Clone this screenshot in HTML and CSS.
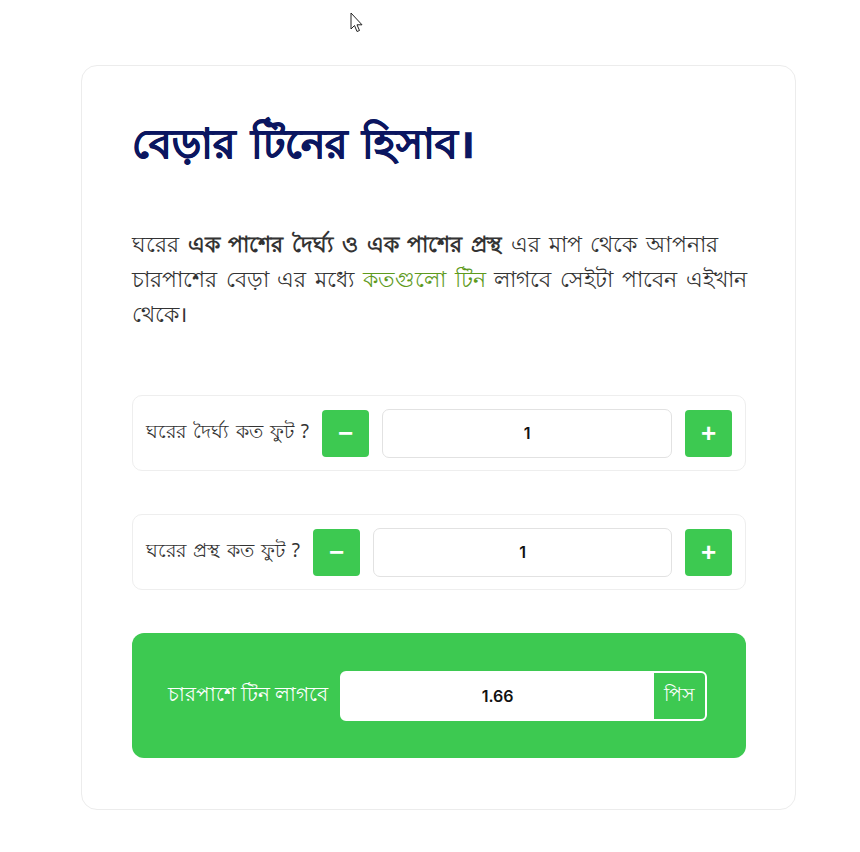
FILE: index.html
```html
<!DOCTYPE html>
<html lang="bn">
<head>
<meta charset="utf-8">
<title>বেড়ার টিনের হিসাব</title>
<link rel="stylesheet" href="styles.css">
</head>
<body>
<svg class="cursor" width="14" height="22" viewBox="0 0 14 22"><path d="M1 1 L1 17 L4.5 13.5 L7 19.5 L9.5 18.5 L7 12.8 L12 12.8 Z" fill="#fff" stroke="#222" stroke-width="1"/></svg>
<main class="card">
  <h1 class="title">বেড়ার টিনের হিসাব।</h1>
  <p class="intro">ঘরের <strong>এক পাশের দৈর্ঘ্য ও এক পাশের প্রস্থ</strong> এর মাপ থেকে আপনার<br>চারপাশের বেড়া এর মধ্যে <span class="accent">কতগুলো টিন</span> লাগবে সেইটা পাবেন এইখান<br>থেকে।</p>

  <div class="field">
    <label class="field-label">ঘরের দৈর্ঘ্য কত ফুট ?</label>
    <button class="step" type="button">−</button>
    <input class="num" type="text" value="1">
    <button class="step" type="button">+</button>
  </div>

  <div class="field">
    <label class="field-label">ঘরের প্রস্থ কত ফুট ?</label>
    <button class="step" type="button">−</button>
    <input class="num" type="text" value="1">
    <button class="step" type="button">+</button>
  </div>

  <div class="result">
    <span class="result-label">চারপাশে টিন লাগবে</span>
    <div class="result-group">
      <span class="result-value">1.66</span>
      <span class="result-unit">পিস</span>
    </div>
  </div>
</main>
</body>
</html>
```
FILE: styles.css
```css
* { box-sizing: border-box; }
html, body { background: #fff; }
body {
  margin: 0;
  padding: 65px 0 40px 81px;
  font-family: "Noto Sans", "Open Sans", sans-serif;
  color: #333;
  position: relative;
}
.cursor { position: absolute; left: 350px; top: 12px; }
.card {
  width: 715px;
  height: 745px;
  border: 1px solid #ececec;
  border-radius: 16px;
  padding: 50px 49px 0 50px;
}
.title {
  margin: 0;
  font-size: 41px;
  font-weight: 700;
  color: #0b1660;
  -webkit-text-stroke: 0.7px #0b1660;
  line-height: 52px;
  word-spacing: 4px;
  white-space: nowrap;
}
.intro {
  margin: 58px 0 64px;
  font-size: 22px;
  line-height: 35px;
  color: #333;
  word-spacing: 3px;
  white-space: nowrap;
}
.intro strong { font-weight: 700; }
.accent { color: #5e9a1c; }
.field {
  display: flex;
  align-items: center;
  gap: 13px;
  height: 76px;
  padding: 0 13px;
  border: 1px solid #eeeeee;
  border-radius: 10px;
  margin-bottom: 43px;
}
.field-label {
  font-size: 19px;
  color: #333;
  white-space: nowrap;
  word-spacing: 2px;
}
.step {
  width: 47px;
  height: 47px;
  flex: none;
  border: none;
  border-radius: 4px;
  background: #3dc951;
  color: #fff;
  font-family: "Liberation Sans", Arial, sans-serif;
  font-size: 26px;
  font-weight: 700;
  line-height: 1;
  padding: 0;
}
.num {
  flex: 1;
  min-width: 0;
  height: 49px;
  border: 1px solid #e2e2e2;
  border-radius: 7px;
  text-align: center;
  font-family: "Inter", "Open Sans", sans-serif;
  font-size: 16px;
  font-weight: 600;
  color: #111;
}
.result {
  display: flex;
  align-items: center;
  gap: 12px;
  height: 125px;
  padding: 0 39px 0 36px;
  background: #3dc951;
  border-radius: 12px;
}
.result-label {
  color: #fff;
  font-size: 19.5px;
  white-space: nowrap;
}
.result-group {
  flex: 1;
  display: flex;
  height: 50px;
  border: 2px solid #fff;
  border-radius: 6px;
  background: #fff;
  overflow: hidden;
}
.result-value {
  flex: 1;
  display: flex;
  align-items: center;
  justify-content: center;
  font-family: "Inter", "Open Sans", sans-serif;
  font-size: 16px;
  font-weight: 600;
  color: #111;
}
.result-unit {
  width: 52px;
  display: flex;
  align-items: center;
  justify-content: center;
  background: #3dc951;
  color: #fff;
  font-size: 19px;
  border-left: 1px solid #fff;
}
```
